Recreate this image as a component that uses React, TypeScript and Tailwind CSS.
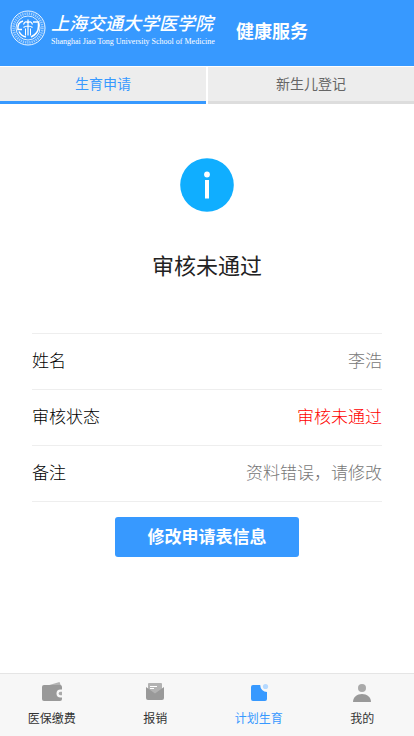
import type { ReactNode } from 'react';

function Emblem() {
  return (
    <svg viewBox="0 0 36 36" className="size-9 shrink-0" fill="none" stroke="#fff" aria-hidden="true">
      <circle cx="18" cy="18" r="17" strokeWidth="1" opacity="0.9" />
      <circle cx="18" cy="18" r="14.4" strokeWidth="2.6" strokeDasharray="1.3 0.9" opacity="0.5" />
      <circle cx="18" cy="18" r="12" strokeWidth="0.9" opacity="0.9" />
      <path d="M13 11C9 12 7.500 15.500 8 19.500h4M23 12h5.500v4.500c0 5-3 8.500-7.500 10.500M9 21.500c1.500 3 4 5 7 5.500" strokeWidth="1.600" />
      <path d="M18 9.500v16M13.500 14.500c1-3 3-3.500 4.500-1.500 1.500-2 3.500-1.500 4.500 1.500M13.500 17.500c2-2 7-2 9 0" strokeWidth="1.200" />
      <path d="M15.500 18.500v7M20.500 18.500v7" strokeWidth="1" />
    </svg>
  );
}

function InfoIcon() {
  return (
    <svg viewBox="0 0 54 54" className="mx-auto size-[54px]" aria-hidden="true">
      <circle cx="27" cy="27" r="26.800" fill="#10aeff" />
      <circle cx="27" cy="16.500" r="2.900" fill="#fff" />
      <rect x="25" y="22" width="4" height="18.500" fill="#fff" />
    </svg>
  );
}

function WalletIcon() {
  return (
    <svg viewBox="0 0 24 24" className="size-6" aria-hidden="true">
      <path d="M6 6 19.500 2 21 6z" fill="#b2b2b2" />
      <path d="M4 5h16a2 2 0 0 1 2 2v12a2 2 0 0 1-2 2H4a2 2 0 0 1-2-2V7a2 2 0 0 1 2-2z" fill="#999" />
      <path d="M22 9.500h-1.500a4 4 0 0 0 0 8H22z" fill="#f7f7f7" />
      <path d="M22 11.700h-1.500a1.800 1.800 0 0 0 0 3.600H22z" fill="#aaa" />
    </svg>
  );
}

function LetterIcon() {
  return (
    <svg viewBox="0 0 24 24" className="size-6" aria-hidden="true">
      <path d="M6 3h12a1 1 0 0 1 1 1v10H5V4a1 1 0 0 1 1-1z" fill="#b2b2b2" />
      <path d="m3 7 9 6.500L21 7v11a2 2 0 0 1-2 2H5a2 2 0 0 1-2-2z" fill="#999" />
      <path d="M7 6.500h7M7 8.500h4" stroke="#fff" strokeWidth="1" />
    </svg>
  );
}

function PlanIcon() {
  return (
    <svg viewBox="0 0 24 24" className="size-6" aria-hidden="true">
      <path d="M6 5h7.200a7 7 0 0 0 6.800 7v7a2 2 0 0 1-2 2H6a2 2 0 0 1-2-2V7a2 2 0 0 1 2-2z" fill="#3799ff" />
      <circle cx="18.500" cy="6.500" r="2.600" fill="#b5d9ff" />
    </svg>
  );
}

function UserIcon() {
  return (
    <svg viewBox="0 0 24 24" className="size-6" aria-hidden="true">
      <circle cx="12" cy="8" r="4" fill="#aaa" />
      <path d="M3 22c0-5 4-8 9-8s9 3 9 8z" fill="#999" />
    </svg>
  );
}

const rows = [
  { label: '姓名', value: '李浩', color: 'text-[#777]' },
  { label: '审核状态', value: '审核未通过', color: 'text-[#f00]' },
  { label: '备注', value: '资料错误\uff0c请修改', color: 'text-[#777]' },
];

const navItems: { label: string; icon: ReactNode; color: string }[] = [
  { label: '医保缴费', icon: <WalletIcon />, color: 'text-[#333]' },
  { label: '报销', icon: <LetterIcon />, color: 'text-[#333]' },
  { label: '计划生育', icon: <PlanIcon />, color: 'text-[#3799ff]' },
  { label: '我的', icon: <UserIcon />, color: 'text-[#333]' },
];

export default function App() {
  return (
    <div
      lang="zh-CN"
      className="flex min-h-screen flex-col bg-white font-['Noto_Sans_CJK_SC',sans-serif] text-black"
    >
      <header className="flex h-[66px] items-start bg-[#3799ff] pt-2.5 pl-2.5 text-white">
        <Emblem />
        <div className="ml-[5px] w-[168px] whitespace-nowrap">
          <div className="text-[18px] leading-6 font-medium italic">上海交通大学医学院</div>
          <div className="font-['Liberation_Serif',serif] text-[8px] leading-4">
            Shanghai Jiao Tong University School of Medicine
          </div>
        </div>
        <h1 className="ml-[17px] text-[18px] leading-10 font-bold">健康服务</h1>
      </header>

      <nav className="mt-px grid grid-cols-2 gap-0.5 text-sm">
        <button className="h-[37px] border-b-3 border-[#3799ff] bg-[#ededed] pb-0.5 text-[#3799ff]">
          生育申请
        </button>
        <button className="h-[37px] border-b-3 border-[#ddd] bg-[#ededed] pb-0.5 text-[#666]">
          新生儿登记
        </button>
      </nav>

      <main className="flex-1 px-8 pt-[54px]">
        <InfoIcon />
        <h2 className="mt-8 text-center text-[22px] leading-10 text-[#222]">审核未通过</h2>
        <dl className="mt-[49px] border-t border-[#eee] text-[17px] font-light">
          {rows.map((row) => (
            <div key={row.label} className="flex h-14 items-center justify-between border-b border-[#eee] pb-1">
              <dt>{row.label}</dt>
              <dd className={row.color}>{row.value}</dd>
            </div>
          ))}
        </dl>
        <button className="mx-auto mt-[15px] block h-10 w-[184px] rounded-[3px] bg-[#3799ff] pb-0.5 text-[17px] font-bold text-white">
          修改申请表信息
        </button>
      </main>

      <footer className="grid h-[63px] grid-cols-4 border-t border-[#e5e5e5] bg-[#f7f7f7] text-xs">
        {navItems.map((item) => (
          <a key={item.label} href="#" className={`flex flex-col items-center pt-1.5 ${item.color}`}>
            {item.icon}
            <span className="mt-[5px] leading-[18px]">{item.label}</span>
          </a>
        ))}
      </footer>
    </div>
  );
}
